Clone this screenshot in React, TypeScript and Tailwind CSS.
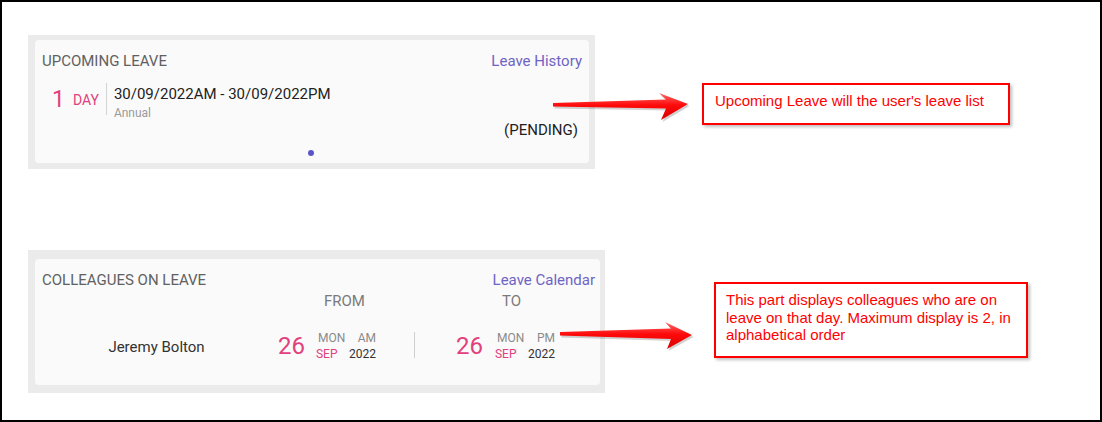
import React from "react";

const roboto = "font-[family-name:Roboto,sans-serif]";
const note = "font-[family-name:'Liberation_Sans',Arial,sans-serif]";

function Arrow({ left, top, w, h, vb, points, id }: { left: string; top: string; w: number; h: number; vb: string; points: string; id: string }) {
  return (
    <svg
      className={`absolute ${left} ${top} pointer-events-none`}
      width={w}
      height={h}
      viewBox={vb}
    >
      <defs>
        <linearGradient id={id} x1="0" y1="0" x2="0" y2="1">
          <stop offset="0" stopColor="#ff6a6a" />
          <stop offset="0.45" stopColor="#ff0a0a" />
          <stop offset="1" stopColor="#d80000" />
        </linearGradient>
      </defs>
      <polygon points={points} fill="#000" opacity="0.18" transform="translate(1.5,2)" />
      <polygon points={points} fill={`url(#${id})`} />
    </svg>
  );
}

function MiniDate({ top, bottom }: { top: string; bottom: string }) {
  return (
    <div className="flex flex-col w-[60px] text-[12px] leading-[16px]">
      <div className="flex justify-between pl-[2px] text-[#8a8a8a]">
        <span>MON</span>
        <span>{top}</span>
      </div>
      <div className="flex justify-between">
        <span className="text-[#e2407c]">SEP</span>
        <span className="text-[#333]">{bottom}</span>
      </div>
    </div>
  );
}

export default function App() {
  return (
    <div className="w-[1102px] h-[422px] border-2 border-black bg-white overflow-hidden">
      <div className="relative w-full h-full flex flex-col">
        {/* Row 1 */}
        <div className="flex items-start">
          <div className={`ml-[26px] mt-[33px] w-[567px] h-[134px] bg-[#ebebeb] pl-[7px] pr-[6px] pt-[5px] pb-[6px] ${roboto}`}>
            <div className="w-full h-full bg-[#fafafa] rounded-[4px] flex flex-col pl-[7px] pr-[7px] pt-[11px]">
              <div className="flex justify-between items-center h-[20px] text-[15px] leading-[20px]">
                <span className="text-[#616161]">UPCOMING LEAVE</span>
                <span className="text-[#6f64c4]">Leave History</span>
              </div>
              <div className="flex items-start h-[32px] mt-[12px] pl-[10px]">
                <span className="text-[23px] leading-[23px] mt-[5px] text-[#e2407c]">1</span>
                <span className="text-[14px] leading-[14px] mt-[10px] ml-[8px] text-[#e2407c]">DAY</span>
                <div className="w-px h-[32px] bg-[#d4d4d4] ml-[7px]" />
                <div className="flex flex-col ml-[7px] mt-[2px]">
                  <span className="text-[15px] leading-[18px] text-[#222]">30/09/2022AM - 30/09/2022PM</span>
                  <span className="text-[12px] leading-[14px] mt-[3px] text-[#9a9a9a]">Annual</span>
                </div>
              </div>
              <div className="flex justify-end mt-[5px] pr-[4px] text-[15px] leading-[20px] text-[#222]">
                (PENDING)
              </div>
              <div className="flex justify-center mt-[10px] pr-[4px]">
                <div className="w-[6px] h-[6px] rounded-full bg-[#5a55c8] ml-[2px]" />
              </div>
            </div>
          </div>
          <div className={`ml-[107px] mt-[81px] w-[308px] h-[42px] border-2 border-[#ff0000] bg-white shadow-[2px_2px_3px_rgba(0,0,0,0.25)] pl-[11px] pt-[7px] text-[15px] leading-[18px] text-[#ff0000] ${note}`}>
            Upcoming Leave will the user's leave list
          </div>
        </div>

        {/* Row 2 */}
        <div className="flex items-start mt-[81px]">
          <div className={`ml-[26px] w-[577px] h-[143px] bg-[#ebebeb] pl-[7px] pr-[5px] pt-[9px] pb-[8px] ${roboto}`}>
            <div className="w-full h-full bg-[#fafafa] rounded-[4px] flex flex-col pl-[7px] pr-[5px] pt-[11px]">
              <div className="flex justify-between items-center h-[20px] text-[15px] leading-[20px]">
                <span className="text-[#616161]">COLLEAGUES ON LEAVE</span>
                <span className="text-[#6f64c4]">Leave Calendar</span>
              </div>
              <div className="flex h-[20px] mt-[1px] text-[15px] leading-[20px] text-[#7a7a7a]">
                <span className="ml-[282px]">FROM</span>
                <span className="ml-[137px]">TO</span>
              </div>
              <div className="flex items-start h-[26px] mt-[21px] -ml-[7px]">
                <div className="w-[243px] mt-[2px] text-center text-[15px] leading-[26px] text-[#333]">Jeremy Bolton</div>
                <span className="mt-[1px] text-[24px] leading-[26px] text-[#e2407c]">26</span>
                <div className="ml-[11px] -mt-[2px]">
                  <MiniDate top="AM" bottom="2022" />
                </div>
                <div className="w-px h-[26px] bg-[#cfcfcf] ml-[38px]" />
                <span className="ml-[41px] mt-[1px] text-[24px] leading-[26px] text-[#e2407c]">26</span>
                <div className="ml-[12px] -mt-[2px]">
                  <MiniDate top="PM" bottom="2022" />
                </div>
              </div>
            </div>
          </div>
          <div className={`ml-[109px] mt-[32px] w-[314px] h-[76px] border-2 border-[#ff0000] bg-white shadow-[2px_2px_3px_rgba(0,0,0,0.25)] pl-[10px] pt-[7px] text-[15px] leading-[17.5px] text-[#ff0000] ${note}`}>
            This part displays colleagues who are on
            <br />
            leave on that day. Maximum display is 2, in
            <br />
            alphabetical order
          </div>
        </div>

        {/* Arrows overlaying the cards */}
        <Arrow
          id="g1"
          left="left-[543px]"
          top="top-[83px]"
          w={150}
          h={45}
          vb="545 85 150 45"
          points="553,103 666,99.5 659,93 688,104 661,120 666,108.5 553,106.5"
        />
        <Arrow
          id="g2"
          left="left-[550px]"
          top="top-[313px]"
          w={150}
          h={45}
          vb="552 315 150 45"
          points="560,332 671,328.5 665,322 692,335 667,349 671,339 560,335.5"
        />
      </div>
    </div>
  );
}
